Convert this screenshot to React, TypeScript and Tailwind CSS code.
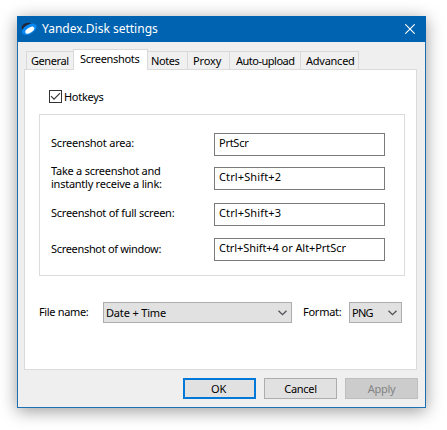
function Chevron() {
  return (
    <svg className="h-[6px] w-[9px]" viewBox="0 0 9 6" fill="none" stroke="#505058" strokeWidth="1.3">
      <path d="M0.5 0.7 4.5 4.7 8.5 0.7" />
    </svg>
  );
}

const tabs = [
  { label: "Notes", box: "w-[40px] pl-[3px]", tracking: "tracking-[-0.4px]" },
  { label: "Proxy", box: "w-[42px] pl-[5px]", tracking: "tracking-[-0.1px]" },
  { label: "Auto-upload", box: "w-[71px] pl-[6px]", tracking: "tracking-[-0.5px]" },
  { label: "Advanced", box: "w-[58px] pl-[5px]", tracking: "tracking-[-0.25px]" },
];

const hotkeys = [
  { lines: ["Screenshot area:"], value: "PrtScr", row: "h-[34px]", label: "pt-[3px] tracking-[-0.2px]", valueTracking: "tracking-[-0.27px]" },
  { lines: ["Take a screenshot and", "instantly receive a link:"], value: "Ctrl+Shift+2", row: "h-[36px]", label: "-mt-[3px] tracking-[-0.25px]", valueTracking: "tracking-[0.12px]" },
  { lines: ["Screenshot of full screen:"], value: "Ctrl+Shift+3", row: "h-[35px]", label: "pt-[3px] tracking-[-0.25px]", valueTracking: "tracking-[0.12px]" },
  { lines: ["Screenshot of window:"], value: "Ctrl+Shift+4 or Alt+PrtScr", row: "h-[23px]", label: "pt-[4px] tracking-[-0.32px]", valueTracking: "tracking-[-0.07px]" },
];

export default function App() {
  return (
    <div className="h-[430px] w-[447px] overflow-hidden bg-white pt-[16px] pl-[17px] font-['Noto_Sans',sans-serif] text-[11px] leading-[13px] whitespace-nowrap text-black">
      <div className="flex h-[392px] w-[409px] flex-col border border-t-0 border-[#1a70b0] bg-[#efefef] shadow-[0_3px_16px_rgba(0,0,0,0.4)]">
        <header className="-mx-px flex h-[26px] shrink-0 items-center bg-[#0063b1] pl-[4px]">
          <svg className="h-[14px] w-[16px]" viewBox="0 0 16 14">
            <ellipse cx="5.8" cy="4.6" rx="5.4" ry="3.6" transform="rotate(-22 5.8 4.6)" fill="#202638" />
            <ellipse cx="8.3" cy="7.2" rx="8" ry="4.7" transform="rotate(-30 8.3 7.2)" fill="#0789f5" />
            <ellipse cx="8.8" cy="8.2" rx="5" ry="2.5" transform="rotate(-33 8.8 8.2)" fill="#fff" />
          </svg>
          <span className="ml-[5px] text-[12px] leading-[16px] text-white">Yandex.Disk settings</span>
          <svg className="mr-[11px] ml-auto h-[10px] w-[10px]" viewBox="0 0 10 10" stroke="#fff" strokeWidth="1.1">
            <path d="M0.3 0.3 9.7 9.7M9.7 0.3 0.3 9.7" />
          </svg>
        </header>

        <nav className="relative z-10 flex h-[28px] shrink-0 items-end pl-[8px]">
          <div className="mb-px h-[18px] w-[47px] border border-r-0 border-b-0 border-[#d9d9d9] bg-[#f0f0f0] pt-[2px] pl-[4px] tracking-[-0.43px]">General</div>
          <div className="h-[21px] w-[75px] border border-b-0 border-[#d9d9d9] bg-white pt-[2px] pl-[6px] tracking-[-0.3px]">Screenshots</div>
          {tabs.map((t) => (
            <div key={t.label} className={`mb-px h-[18px] border border-b-0 border-l-0 border-[#d9d9d9] bg-[#f0f0f0] pt-[2px] ${t.box} ${t.tracking}`}>
              {t.label}
            </div>
          ))}
        </nav>

        <main className="-mt-px ml-[6px] h-[301px] w-[393px] border border-[#dadada] bg-white">
          <label className="mt-[20px] ml-[24px] flex h-[13px] items-center">
            <span className="flex h-[13px] w-[13px] items-center justify-center border border-[#333] bg-white">
              <svg className="h-[9px] w-[11px]" viewBox="0 0 11 9" fill="none" stroke="#333" strokeWidth="1.2">
                <path d="M1 4.2 4 7.2 10 1.2" />
              </svg>
            </span>
            <span className="ml-[2px] tracking-[-0.3px]">Hotkeys</span>
          </label>

          <section className="mt-[11px] ml-[14px] h-[162px] w-[366px] border border-[#dcdcdc] pt-[18px] pl-[11px]">
            {hotkeys.map((h) => (
              <div key={h.value} className={`flex ${h.row}`}>
                <div className={`w-[163px] ${h.label}`}>
                  {h.lines.map((l) => (
                    <div key={l}>{l}</div>
                  ))}
                </div>
                <div className={`h-[23px] w-[171px] border border-[#7a7a7a] bg-white pt-[2px] pl-[4px] ${h.valueTracking}`}>{h.value}</div>
              </div>
            ))}
          </section>

          <div className="mt-[26px] ml-[14px] flex">
            <span className="w-[64px] pt-[3px] tracking-[-0.34px]">File name:</span>
            <div className="flex h-[21px] w-[189px] items-center justify-between border border-[#adadad] bg-[#e1e1e1] pr-[4px] pl-[2px] tracking-[-0.17px]">
              Date + Time
              <Chevron />
            </div>
            <span className="ml-[11px] w-[46px] pt-[3px] tracking-[-0.25px]">Format:</span>
            <div className="flex h-[21px] w-[53px] items-center justify-between border border-[#adadad] bg-[#e1e1e1] pr-[4px] pl-[2px] tracking-[-0.7px]">
              PNG
              <Chevron />
            </div>
          </div>
        </main>

        <footer className="mt-[8px] ml-[165px] flex gap-[8px]">
          <button className="h-[21px] w-[73px] border-2 border-[#0078d7] bg-[#e1e1e1] pr-[2px] tracking-[-0.3px]">OK</button>
          <button className="h-[21px] w-[73px] border border-[#adadad] bg-[#e1e1e1] tracking-[-0.3px]">Cancel</button>
          <button className="h-[21px] w-[73px] border border-[#bfbfbf] bg-[#cccccc] tracking-[-0.3px] text-[#838383]">Apply</button>
        </footer>
      </div>
    </div>
  );
}
